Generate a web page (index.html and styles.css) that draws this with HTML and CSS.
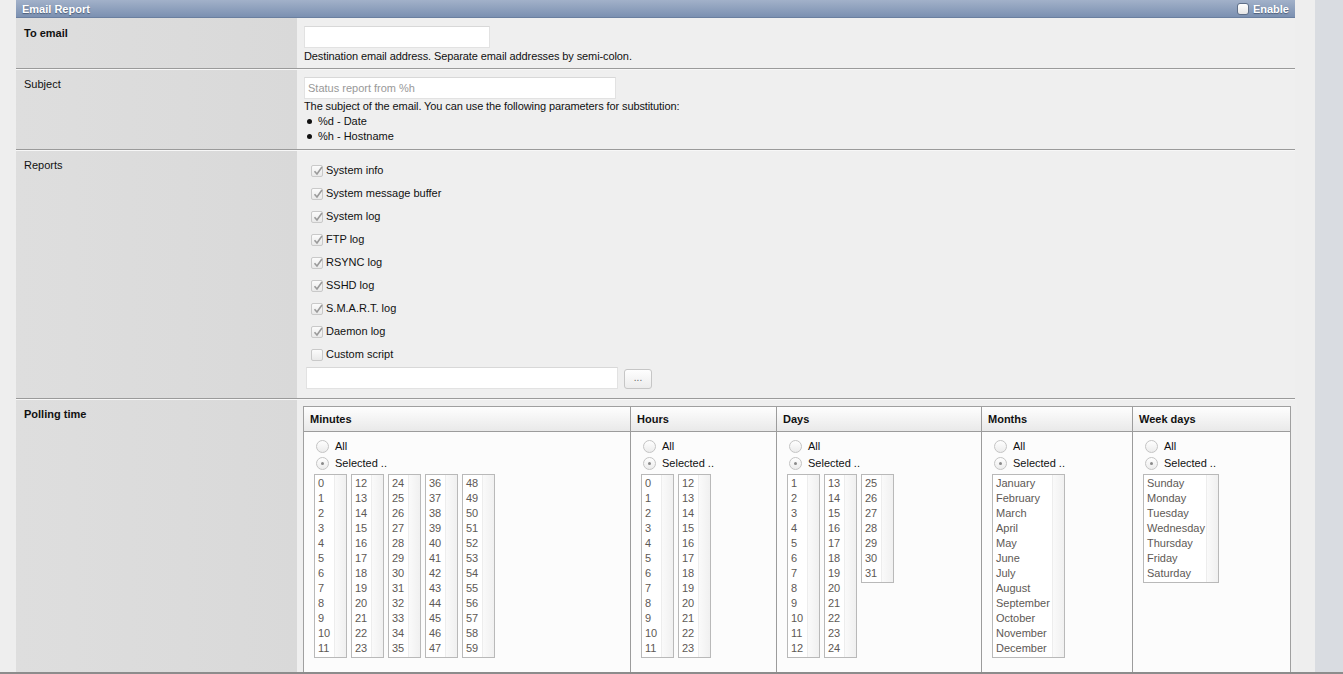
FILE: index.html
```html
<!DOCTYPE html>
<html>
<head>
<meta charset="utf-8">
<link rel="stylesheet" href="styles.css">
</head>
<body>
<div class="page">
  <div class="main">
    <div class="panel">
      <div class="titlebar">
        <span class="title">Email Report</span>
        <label class="enable"><span class="hcb"></span>Enable</label>
      </div>

      <div class="row row-email">
        <div class="label bold">To email</div>
        <div class="value">
          <div class="input in-email"></div>
          <div class="desc">Destination email address. Separate email addresses by semi-colon.</div>
        </div>
      </div>

      <div class="row row-subject">
        <div class="label">Subject</div>
        <div class="value">
          <div class="input in-subject"><span class="ph">Status report from %h</span></div>
          <div class="desc">The subject of the email. You can use the following parameters for substitution:</div>
          <ul class="bullets">
            <li>%d - Date</li>
            <li>%h - Hostname</li>
          </ul>
        </div>
      </div>

      <div class="row row-reports">
        <div class="label">Reports</div>
        <div class="value">
          <div class="checks">
            <div class="ck"><span class="cb on"><svg viewBox="0 0 12 12"><path d="M2.5 6.2 L5 9 L10 2"/></svg></span>System info</div>
            <div class="ck"><span class="cb on"><svg viewBox="0 0 12 12"><path d="M2.5 6.2 L5 9 L10 2"/></svg></span>System message buffer</div>
            <div class="ck"><span class="cb on"><svg viewBox="0 0 12 12"><path d="M2.5 6.2 L5 9 L10 2"/></svg></span>System log</div>
            <div class="ck"><span class="cb on"><svg viewBox="0 0 12 12"><path d="M2.5 6.2 L5 9 L10 2"/></svg></span>FTP log</div>
            <div class="ck"><span class="cb on"><svg viewBox="0 0 12 12"><path d="M2.5 6.2 L5 9 L10 2"/></svg></span>RSYNC log</div>
            <div class="ck"><span class="cb on"><svg viewBox="0 0 12 12"><path d="M2.5 6.2 L5 9 L10 2"/></svg></span>SSHD log</div>
            <div class="ck"><span class="cb on"><svg viewBox="0 0 12 12"><path d="M2.5 6.2 L5 9 L10 2"/></svg></span>S.M.A.R.T. log</div>
            <div class="ck"><span class="cb on"><svg viewBox="0 0 12 12"><path d="M2.5 6.2 L5 9 L10 2"/></svg></span>Daemon log</div>
            <div class="ck"><span class="cb"></span>Custom script</div>
          </div>
          <div class="script-row">
            <div class="input in-script"></div>
            <div class="btn">...</div>
          </div>
        </div>
      </div>

      <div class="row row-polling">
        <div class="label bold">Polling time</div>
        <div class="value">
          <div class="ptable">
            <div class="pcol c-min">
              <div class="phead">Minutes</div>
              <div class="pbody">
                <div class="rd"><span class="radio"></span>All</div>
                <div class="rd"><span class="radio sel"></span>Selected ..</div>
                <div class="boxes">
                  <div class="lb n2"><div class="items"><div>0</div><div>1</div><div>2</div><div>3</div><div>4</div><div>5</div><div>6</div><div>7</div><div>8</div><div>9</div><div>10</div><div>11</div></div><div class="sb"></div></div>
                  <div class="lb n2"><div class="items"><div>12</div><div>13</div><div>14</div><div>15</div><div>16</div><div>17</div><div>18</div><div>19</div><div>20</div><div>21</div><div>22</div><div>23</div></div><div class="sb"></div></div>
                  <div class="lb n2"><div class="items"><div>24</div><div>25</div><div>26</div><div>27</div><div>28</div><div>29</div><div>30</div><div>31</div><div>32</div><div>33</div><div>34</div><div>35</div></div><div class="sb"></div></div>
                  <div class="lb n2"><div class="items"><div>36</div><div>37</div><div>38</div><div>39</div><div>40</div><div>41</div><div>42</div><div>43</div><div>44</div><div>45</div><div>46</div><div>47</div></div><div class="sb"></div></div>
                  <div class="lb n2"><div class="items"><div>48</div><div>49</div><div>50</div><div>51</div><div>52</div><div>53</div><div>54</div><div>55</div><div>56</div><div>57</div><div>58</div><div>59</div></div><div class="sb"></div></div>
                </div>
              </div>
            </div>
            <div class="pcol c-hour">
              <div class="phead">Hours</div>
              <div class="pbody">
                <div class="rd"><span class="radio"></span>All</div>
                <div class="rd"><span class="radio sel"></span>Selected ..</div>
                <div class="boxes">
                  <div class="lb n2"><div class="items"><div>0</div><div>1</div><div>2</div><div>3</div><div>4</div><div>5</div><div>6</div><div>7</div><div>8</div><div>9</div><div>10</div><div>11</div></div><div class="sb"></div></div>
                  <div class="lb n2"><div class="items"><div>12</div><div>13</div><div>14</div><div>15</div><div>16</div><div>17</div><div>18</div><div>19</div><div>20</div><div>21</div><div>22</div><div>23</div></div><div class="sb"></div></div>
                </div>
              </div>
            </div>
            <div class="pcol c-day">
              <div class="phead">Days</div>
              <div class="pbody">
                <div class="rd"><span class="radio"></span>All</div>
                <div class="rd"><span class="radio sel"></span>Selected ..</div>
                <div class="boxes">
                  <div class="lb n2"><div class="items"><div>1</div><div>2</div><div>3</div><div>4</div><div>5</div><div>6</div><div>7</div><div>8</div><div>9</div><div>10</div><div>11</div><div>12</div></div><div class="sb"></div></div>
                  <div class="lb n2"><div class="items"><div>13</div><div>14</div><div>15</div><div>16</div><div>17</div><div>18</div><div>19</div><div>20</div><div>21</div><div>22</div><div>23</div><div>24</div></div><div class="sb"></div></div>
                  <div class="lb n2"><div class="items"><div>25</div><div>26</div><div>27</div><div>28</div><div>29</div><div>30</div><div>31</div></div><div class="sb"></div></div>
                </div>
              </div>
            </div>
            <div class="pcol c-month">
              <div class="phead">Months</div>
              <div class="pbody">
                <div class="rd"><span class="radio"></span>All</div>
                <div class="rd"><span class="radio sel"></span>Selected ..</div>
                <div class="boxes">
                  <div class="lb wm"><div class="items"><div>January</div><div>February</div><div>March</div><div>April</div><div>May</div><div>June</div><div>July</div><div>August</div><div>September</div><div>October</div><div>November</div><div>December</div></div><div class="sb"></div></div>
                </div>
              </div>
            </div>
            <div class="pcol c-week">
              <div class="phead">Week days</div>
              <div class="pbody">
                <div class="rd"><span class="radio"></span>All</div>
                <div class="rd"><span class="radio sel"></span>Selected ..</div>
                <div class="boxes">
                  <div class="lb ww"><div class="items"><div>Sunday</div><div>Monday</div><div>Tuesday</div><div>Wednesday</div><div>Thursday</div><div>Friday</div><div>Saturday</div></div><div class="sb"></div></div>
                </div>
              </div>
            </div>
          </div>
        </div>
      </div>
    </div>
  </div>
  <div class="side"></div>
</div>
</body>
</html>
```

FILE: styles.css
```css
html, body {
  margin: 0;
  padding: 0;
}
body {
  font-family: "Liberation Sans", Arial, sans-serif;
  font-size: 11px;
  color: #111;
  background: #eeeeee;
}
.page {
  display: flex;
  height: 672px;
  overflow: hidden;
  border-bottom: 2px solid #8c8c8c;
}
.main {
  width: 1315px;
  padding-left: 16px;
  box-sizing: border-box;
  background: #eeeeee;
}
.side {
  flex: 1;
  background: #d9dce1;
}
.panel {
  width: 1279px;
}
.titlebar {
  height: 17px;
  background: linear-gradient(#a2b1c9, #7b90b1);
  border-bottom: 1px solid #6a7f9f;
  display: flex;
  align-items: center;
  justify-content: space-between;
  color: #fff;
  font-weight: bold;
  text-shadow: 0 1px 1px #4b5d78;
  padding: 0 6px;
}
.enable {
  display: flex;
  align-items: center;
}
.hcb {
  width: 10px;
  height: 10px;
  border: 1px solid #5f6f88;
  border-radius: 3px;
  background: linear-gradient(#ffffff, #e6e6e6);
  margin-right: 4px;
}
.row {
  display: flex;
  border-bottom: 1px solid #9a9a9a;
  box-shadow: 0 1px 0 #f7f7f7;
  margin-bottom: 1px;
}
.label {
  width: 281px;
  flex: none;
  box-sizing: border-box;
  padding: 8px 8px 0;
  background: linear-gradient(90deg, #dedede, #d9d9d9);
  line-height: 15px;
}
.bold { font-weight: bold; }
.value {
  flex: 1;
  padding: 8px 7px 0;
  background: #efefef;
  line-height: 15px;
}
.desc { letter-spacing: -0.1px; }
.input {
  background: #fff;
  border: 1px solid #e2e2e2;
  border-top-color: #d8d8d8;
  box-sizing: border-box;
  height: 22px;
}
.in-email { width: 186px; }
.row-email { height: 50px; }
.row-email .desc { margin-top: 1px; }
.in-subject { width: 312px; padding: 3px 3px; color: #999; }
.row-subject { height: 79px; }
.row-subject .value { padding-top: 7px; }
.row-subject .label { padding-top: 7px; }
.bullets {
  margin: 0;
  padding: 0 0 0 14px;
  list-style: none;
}
.bullets li { position: relative; }
.bullets li::before {
  content: "";
  position: absolute;
  left: -11px;
  top: 5px;
  width: 5px;
  height: 5px;
  border-radius: 50%;
  background: #111;
}
.row-reports { height: 247px; }
.row-reports .label { padding-top: 7px; }
.row-reports .value { padding-top: 8px; }
.checks { padding-left: 7px; }
.ck {
  display: flex;
  align-items: center;
  height: 23px;
}
.cb {
  width: 12px;
  height: 12px;
  box-sizing: border-box;
  border: 1px solid #c9c9c9;
  border-radius: 2px;
  background: linear-gradient(#fbfbfb, #e9e9e9);
  margin-right: 3px;
  position: relative;
}
.cb svg {
  position: absolute;
  left: 0;
  top: -1px;
  width: 12px;
  height: 12px;
  fill: none;
  stroke: #9a9a9a;
  stroke-width: 1.6;
}
.script-row {
  display: flex;
  align-items: center;
  margin-top: 1px;
  padding-left: 2px;
}
.in-script { width: 312px; }
.btn {
  margin-left: 6px;
  width: 28px;
  height: 20px;
  box-sizing: border-box;
  border: 1px solid #c6c6c6;
  border-radius: 3px;
  background: linear-gradient(#fefefe, #ececec);
  color: #666;
  text-align: center;
  line-height: 16px;
  font-size: 10px;
  margin-top: 2px;
}
.row-polling { height: 400px; }
.row-polling .label { padding-top: 7px; }
.row-polling .value { padding: 6px 6px 0; }
.ptable {
  display: flex;
  width: 986px;
  border: 1px solid #a0a0a0;
  border-bottom: none;
  background: #fcfcfc;
  height: 400px;
}
.pcol {
  border-right: 1px solid #9c9c9c;
  box-sizing: border-box;
}
.pcol:last-child { border-right: none; }
.c-min { width: 327px; }
.c-hour { width: 146px; }
.c-day { width: 205px; }
.c-month { width: 151px; }
.c-week { flex: 1; }
.phead {
  height: 24px;
  border-bottom: 1px solid #9c9c9c;
  background: linear-gradient(#fefefe, #e9e9e9);
  font-weight: bold;
  padding-left: 6px;
  line-height: 24px;
}
.pbody {
  padding: 6px 9px 0 10px;
}
.rd {
  display: flex;
  align-items: center;
  height: 17px;
}
.radio {
  width: 13px;
  height: 13px;
  box-sizing: border-box;
  border: 1px solid #c4c4c4;
  border-radius: 50%;
  background: linear-gradient(#fefefe, #ececec);
  margin: 0 6px 0 2px;
  position: relative;
}
.radio.sel::after {
  content: "";
  position: absolute;
  left: 4px;
  top: 4px;
  width: 3px;
  height: 3px;
  border-radius: 50%;
  background: #8a8a8a;
}
.boxes {
  display: flex;
  align-items: flex-start;
  gap: 4px;
  margin-top: 2px;
}
.lb {
  display: flex;
  border: 1px solid #b9b9b9;
  background: #fff;
  color: #5e5955;
  line-height: 15px;
  padding: 1px 0;
  box-sizing: border-box;
}
.lb .items {
  flex: 1;
  padding-left: 3px;
}
.lb .sb {
  width: 11px;
  border-left: 1px solid #ededed;
  background: linear-gradient(90deg, #fafafa, #f0f0f0);
  margin: -1px 0;
}
.n2 { width: 33px; }
.wm { width: 73px; }
.ww { width: 76px; }
```
